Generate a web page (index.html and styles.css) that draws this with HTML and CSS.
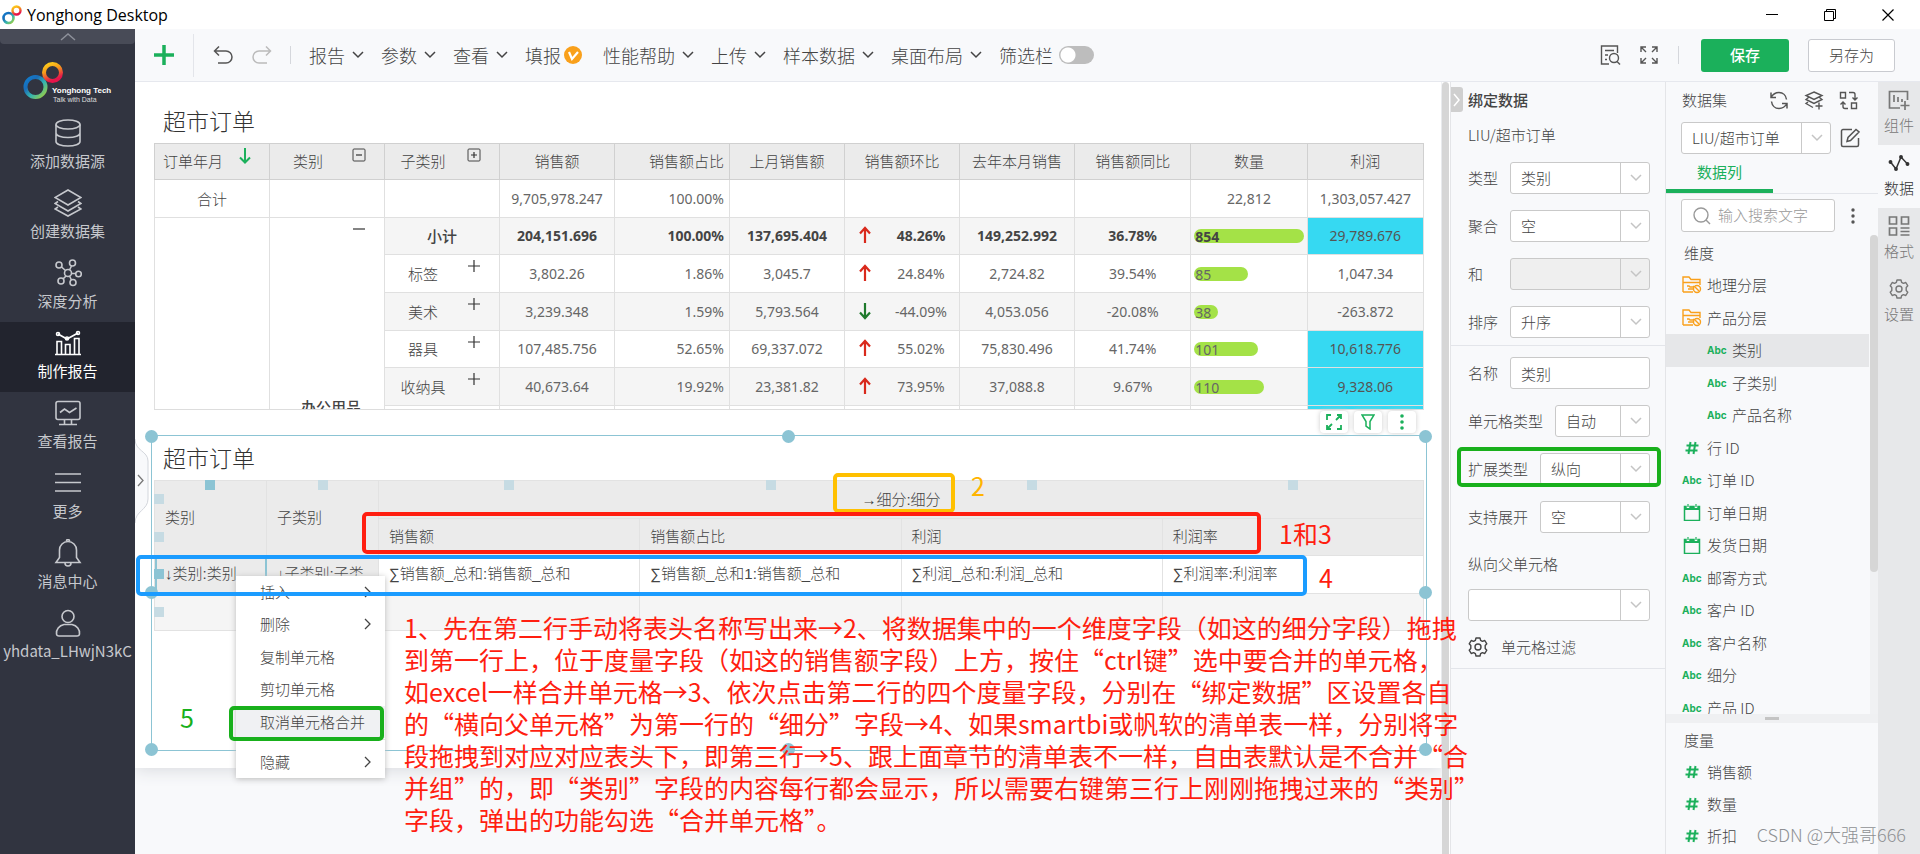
FILE: index.html
```html
<!DOCTYPE html>
<html lang="zh-CN">
<head>
<meta charset="utf-8">
<title>Yonghong Desktop</title>
<link rel="stylesheet" href="styles.css">
</head>
<body>
<svg class="defs" aria-hidden="true">
  <defs>
    <linearGradient id="cool" x1="0" y1="0" x2="1" y2="1"><stop offset="0" stop-color="#0f7fd0"/><stop offset=".3" stop-color="#1a6cb8"/><stop offset=".6" stop-color="#35b5b0"/><stop offset="1" stop-color="#a5d13a"/></linearGradient>
    <linearGradient id="warm" x1="0" y1="0" x2=".4" y2="1"><stop offset="0" stop-color="#ffd21a"/><stop offset=".45" stop-color="#f59a1c"/><stop offset="1" stop-color="#e5144b"/></linearGradient>
    <symbol id="chev" viewBox="0 0 12 8"><path d="M1 1l5 5 5-5" fill="none" stroke="currentColor" stroke-width="1.5"/></symbol>
    <symbol id="right" viewBox="0 0 8 12"><path d="M1 1l5 5-5 5" fill="none" stroke="currentColor" stroke-width="1.3"/></symbol>
    <symbol id="plus" viewBox="0 0 14 14"><path d="M7 1v12M1 7h12" fill="none" stroke="#333" stroke-width="1.2"/></symbol>
    <symbol id="up" viewBox="0 0 14 18"><path d="M7 17V2M2 7.500l5-5.500 5 5.500" fill="none" stroke="#d9291c" stroke-width="2.200"/></symbol>
    <symbol id="down" viewBox="0 0 14 18"><path d="M7 1v15M2 10.500l5 5.500 5-5.500" fill="none" stroke="#1f7a2c" stroke-width="2.200"/></symbol>
    <symbol id="folder" viewBox="0 0 20 18"><path d="M1 16V1h6l2 2.500h9V9M1 16h10M1 6.500h17M5 10h2l1 1h3l1-1M6 13h5" fill="none" stroke="#f9a01b" stroke-width="1.400"/><circle cx="15" cy="13" r="3.500" fill="none" stroke="#f9a01b" stroke-width="1.400"/><path d="M13 11l4 4" stroke="#f9a01b" stroke-width="1.400"/></symbol>
    <symbol id="hash" viewBox="0 0 14 14"><path d="M5.500 1l-2 12M10.500 1l-2 12M1.500 4.500h12M.500 9.500h12" fill="none" stroke="#1bb05b" stroke-width="2"/></symbol>
    <symbol id="cal" viewBox="0 0 17 17"><path d="M1 2.500h15v14H1z" fill="none" stroke="#1bb05b" stroke-width="1.500"/><path d="M1 2h15v4H1z" fill="#1bb05b"/><path d="M4.500 0v4M12.500 0v4" stroke="#f8f9fb" stroke-width="2.500"/><path d="M4.500 0v3M12.500 0v3" stroke="#1bb05b" stroke-width="1.200"/></symbol>
    <symbol id="gear" viewBox="0 0 20 20"><path d="M8 1h4l.6 2.300 1.800 1 2.400-.8 2 3.300L17.200 8.500v3l1.600 1.700-2 3.300-2.400-.8-1.800 1L12 19H8l-.6-2.300-1.800-1-2.400.8-2-3.300 1.600-1.700v-3L1.200 6.800l2-3.300 2.400.8 1.800-1z" fill="none" stroke="currentColor" stroke-width="1.400" stroke-linejoin="round"/><circle cx="10" cy="10" r="3" fill="none" stroke="currentColor" stroke-width="1.400"/></symbol>
  </defs>
</svg>

<header class="titlebar">
  <svg class="app-logo" viewBox="0 0 20 20" width="20" height="20"><circle cx="6.500" cy="13" r="5" fill="none" stroke="url(#cool)" stroke-width="2.600"/><circle cx="14.500" cy="5.500" r="4" fill="none" stroke="url(#warm)" stroke-width="2.400"/></svg>
  <span class="app-name">Yonghong Desktop</span>
  <button class="win" aria-label="最小化"><svg width="12" height="12"><path d="M0 5.500h12" stroke="#000"/></svg></button>
  <button class="win" aria-label="还原"><svg width="12" height="12" fill="none" stroke="#000"><path d="M.500 2.500h9v9h-9zM2.500 2V.500h9v9H10"/></svg></button>
  <button class="win" aria-label="关闭"><svg width="12" height="12"><path d="M.500.500l11 11M11.500.500l-11 11" stroke="#000" stroke-width="1.200"/></svg></button>
</header>

<div class="app">
<nav class="sidebar">
  <button class="collapse" aria-label="收起"><svg width="16" height="8" fill="none" stroke="#8d909a" stroke-width="1.500"><path d="M1 7l7-6 7 6"/></svg></button>
  <svg class="brand" width="100" height="46" viewBox="0 0 100 46"><circle cx="17.500" cy="29" r="10" fill="none" stroke="url(#cool)" stroke-width="4"/><circle cx="34.500" cy="14.500" r="8.500" fill="none" stroke="url(#warm)" stroke-width="4"/><text x="34" y="35" class="brand-name">Yonghong Tech</text><text x="35" y="44" class="brand-tag">Talk with Data</text></svg>
  <a class="nav" href="#"><svg width="28" height="28"><ellipse cx="14" cy="5.500" rx="12" ry="4.500"/><path d="M2 5.500v17c0 2.500 5 4.500 12 4.500s12-2 12-4.500v-17M2 14c0 2.500 5 4.500 12 4.500s12-2 12-4.500"/></svg><span>添加数据源</span></a>
  <a class="nav" href="#"><svg width="28" height="28"><path d="M14 1l13 7.500L14 16 1 8.500zM4 12.500l-3 2L14 22l13-7.500-3-2M4 18l-3 2 13 7 13-7-3-2"/></svg><span>创建数据集</span></a>
  <a class="nav" href="#"><svg width="28" height="28"><circle cx="14" cy="14" r="3.500"/><circle cx="5" cy="6" r="3"/><circle cx="18.500" cy="4" r="3"/><circle cx="24.500" cy="15" r="2.800"/><circle cx="19" cy="23.500" r="3"/><circle cx="7" cy="22" r="3"/><path d="M7.500 8l4 3.500M17.500 7l-2 4M17.500 14.500h4M15.500 17l2 4M12 17l-3 3"/></svg><span>深度分析</span></a>
  <a class="nav active" href="#"><svg width="28" height="28"><path d="M1 25.500h26M3 25V12.500h4.500V25M11.500 25v-9.500H16V25M20.500 25V9.500H25V25M4 5l9 5 11-6"/><circle cx="4" cy="5" r="1.500"/><circle cx="13" cy="9.500" r="1.500"/><circle cx="24" cy="4" r="1.500"/></svg><span>制作报告</span></a>
  <a class="nav" href="#"><svg width="28" height="28"><rect x="2" y="2.500" width="24" height="18" rx="2"/><path d="M6 13.500l4.500-3.500 5 3.500 7-4.500M10.500 21v4M17.500 21v4M5 25.500h18"/></svg><span>查看报告</span></a>
  <a class="nav" href="#"><svg width="28" height="28"><path d="M1 5h26M1 13.500h26M1 22h26"/></svg><span>更多</span></a>
  <a class="nav" href="#"><svg width="28" height="28"><path d="M2 23.500h24l-3.500-5V11a8.500 8.500 0 0 0-17 0v7.500zM12.500 2a1.500 1.500 0 0 1 3 0M11 24a3 3 0 0 0 6 0"/></svg><span>消息中心</span></a>
  <a class="nav" href="#"><svg width="28" height="28"><circle cx="14" cy="7.500" r="6"/><path d="M10 15.500h8c5 1 8 5 7.500 9.500-.2 1.500-1 2-2.500 2H5c-1.500 0-2.300-.5-2.500-2C2 20.500 5 16.500 10 15.500z"/></svg><span>yhdata_LHwjN3kC</span></a>
</nav>

<div class="workspace">
<div class="toolbar">
  <button class="add" aria-label="新建"><svg width="20" height="20"><path d="M10 0v20M0 10h20" stroke="#1bb05b" stroke-width="3.500"/></svg></button>
  <button class="tool" aria-label="撤销"><svg width="20" height="18" fill="none" stroke="#555" stroke-width="1.500"><path d="M1.500 5H13a6 6 0 0 1 0 12H5M6 .500L1.500 5 6 9.500"/></svg></button>
  <button class="tool" aria-label="重做"><svg width="20" height="18" fill="none" stroke="#bbb" stroke-width="1.500"><path d="M18.500 5H7a6 6 0 0 0 0 12h8M14 .500L18.500 5 14 9.500"/></svg></button>
  <i class="sep"></i>
  <div class="menus">
    <button class="menu-btn">报告<svg width="12" height="8"><use href="#chev"/></svg></button>
    <button class="menu-btn">参数<svg width="12" height="8"><use href="#chev"/></svg></button>
    <button class="menu-btn">查看<svg width="12" height="8"><use href="#chev"/></svg></button>
    <button class="menu-btn vip">填报<svg width="18" height="18"><circle cx="9" cy="9" r="9" fill="#f9a01b"/><path d="M5 6l3 7 6-7" fill="none" stroke="#fff" stroke-width="2.200"/></svg></button>
    <button class="menu-btn">性能帮助<svg width="12" height="8"><use href="#chev"/></svg></button>
    <button class="menu-btn">上传<svg width="12" height="8"><use href="#chev"/></svg></button>
    <button class="menu-btn">样本数据<svg width="12" height="8"><use href="#chev"/></svg></button>
    <button class="menu-btn">桌面布局<svg width="12" height="8"><use href="#chev"/></svg></button>
    <label class="filter">筛选栏<input type="checkbox" class="switch"></label>
  </div>
  <div class="actions">
    <button class="tool" aria-label="预览"><svg width="21" height="20" fill="none" stroke="#555" stroke-width="1.400"><path d="M9 19H1.500V1h16v7M5 5.500h9M5 10h3M5 14.500h2"/><circle cx="14" cy="13" r="4.500"/><path d="M17 16.500l3 3"/></svg></button>
    <button class="tool" aria-label="全屏"><svg width="18" height="18" fill="none" stroke="#555" stroke-width="1.400"><path d="M1 6V1h5M1 1l5 5M12 1h5v5M17 1l-5 5M1 12v5h5M1 17l5-5M17 12v5h-5M17 17l-5-5"/></svg></button>
    <i class="sep"></i>
    <button class="save">保存</button>
    <button class="save-as">另存为</button>
  </div>
</div>

<div class="content">
<main class="canvas">
  <div class="sheet">
    <section class="widget">
      <h2>超市订单</h2>
      <div class="clip">
      <table class="pivot">
        <thead><tr>
          <th class="tag">订单年月<svg class="mark" width="12" height="16"><path d="M6 0v14M1 9.500l5 5 5-5" fill="none" stroke="#1bb05b" stroke-width="2"/></svg></th>
          <th class="tag">类别<svg class="mark" width="14" height="14"><rect x="1" y="1" width="12" height="12" rx="1" fill="none" stroke="#444"/><path d="M4 7h6" stroke="#333" stroke-width="1.200"/></svg></th>
          <th class="tag">子类别<svg class="mark" width="14" height="14"><rect x="1" y="1" width="12" height="12" rx="1" fill="none" stroke="#444"/><path d="M4 7h6M7 4v6" stroke="#333" stroke-width="1.200"/></svg></th>
          <th>销售额</th><th class="r">销售额占比</th><th>上月销售额</th><th>销售额环比</th><th>去年本月销售</th><th>销售额同比</th><th>数量</th><th>利润</th>
        </tr></thead>
        <tbody>
          <tr><td class="cn">合计</td><td></td><td></td><td>9,705,978.247</td><td class="r">100.00%</td><td></td><td></td><td></td><td></td><td>22,812</td><td>1,303,057.427</td></tr>
          <tr class="alt bold"><td rowspan="6" class="blank"></td><td rowspan="6" class="blank group cn">办公用品<svg class="mark" width="14" height="14"><path d="M1 7h12" stroke="#333" stroke-width="1.200"/></svg></td><td class="cn">小计</td><td>204,151.696</td><td class="r">100.00%</td><td>137,695.404</td><td class="trend"><svg width="14" height="18"><use href="#up"/></svg><span>48.26%</span></td><td>149,252.992</td><td>36.78%</td><td class="bar"><div style="width:110px">854</div></td><td class="hot">29,789.676</td></tr>
          <tr><td class="cn tag">标签<svg class="mark" width="14" height="14"><use href="#plus"/></svg></td><td>3,802.26</td><td class="r">1.86%</td><td>3,045.7</td><td class="trend"><svg width="14" height="18"><use href="#up"/></svg><span>24.84%</span></td><td>2,724.82</td><td>39.54%</td><td class="bar"><div style="width:54px">85</div></td><td>1,047.34</td></tr>
          <tr class="alt"><td class="cn tag">美术<svg class="mark" width="14" height="14"><use href="#plus"/></svg></td><td>3,239.348</td><td class="r">1.59%</td><td>5,793.564</td><td class="trend"><svg width="14" height="18"><use href="#down"/></svg><span>-44.09%</span></td><td>4,053.056</td><td>-20.08%</td><td class="bar"><div style="width:24px">38</div></td><td>-263.872</td></tr>
          <tr><td class="cn tag">器具<svg class="mark" width="14" height="14"><use href="#plus"/></svg></td><td>107,485.756</td><td class="r">52.65%</td><td>69,337.072</td><td class="trend"><svg width="14" height="18"><use href="#up"/></svg><span>55.02%</span></td><td>75,830.496</td><td>41.74%</td><td class="bar"><div style="width:64px">101</div></td><td class="hot">10,618.776</td></tr>
          <tr class="alt"><td class="cn tag">收纳具<svg class="mark" width="14" height="14"><use href="#plus"/></svg></td><td>40,673.64</td><td class="r">19.92%</td><td>23,381.82</td><td class="trend"><svg width="14" height="18"><use href="#up"/></svg><span>73.95%</span></td><td>37,088.8</td><td>9.67%</td><td class="bar"><div style="width:70px">110</div></td><td class="hot">9,328.06</td></tr>
          <tr><td></td><td></td><td></td><td></td><td></td><td></td><td></td><td></td><td class="hot"></td></tr>
        </tbody>
      </table>
      </div>
    </section>

    <section class="widget selected">
      <div class="float-tools">
        <button aria-label="放大"><svg width="16" height="16" fill="none" stroke="#1bb05b" stroke-width="1.800"><path d="M1 6V1h4M11 1h4v4M15 1l-5 5M15 11v4h-4M5 15H1v-4M1 15l5-5"/></svg></button>
        <button aria-label="筛选"><svg width="14" height="16" fill="none" stroke="#1bb05b" stroke-width="1.500"><path d="M1 1h12L9 7.500V15l-4-3V7.500z"/></svg></button>
        <button aria-label="更多"><svg width="6" height="16" fill="#1bb05b"><circle cx="3" cy="2" r="1.800"/><circle cx="3" cy="8" r="1.800"/><circle cx="3" cy="14" r="1.800"/></svg></button>
      </div>
      <h2>超市订单</h2>
      <table class="free">
        <colgroup><col class="dim"><col class="dim"><col><col><col><col></colgroup>
        <tr class="head"><td rowspan="2">类别</td><td rowspan="2">子类别</td><td colspan="4" class="center">→细分:细分</td></tr>
        <tr class="head"><td>销售额</td><td>销售额占比</td><td>利润</td><td>利润率</td></tr>
        <tr><td class="dimcell picked">↓类别:类别</td><td class="dimcell">↓子类别:子类</td><td>∑销售额_总和:销售额_总和</td><td>∑销售额_总和1:销售额_总和</td><td>∑利润_总和:利润_总和</td><td>∑利润率:利润率</td></tr>
        <tr class="tail"><td class="dimcell"></td><td></td><td></td><td></td><td></td><td></td></tr>
      </table>
      <i class="sq on c1"></i><i class="sq c2"></i><i class="sq c3"></i><i class="sq c4"></i><i class="sq c5"></i><i class="sq c6"></i>
      <i class="sq r1"></i><i class="sq r2"></i><i class="sq on r3"></i><i class="sq r4"></i>
      <i class="dot tl"></i><i class="dot tc"></i><i class="dot tr"></i><i class="dot ml"></i><i class="dot mr"></i><i class="dot bl"></i><i class="dot bc"></i><i class="dot br"></i>
    </section>
  </div>
  <button class="drawer" aria-label="展开"><svg width="15" height="86"><path d="M0 1c0 12 13 12 13 22v38c0 11-13 12-13 24" fill="#f8f9fb" stroke="#d3d6dc"/><path d="M3 37l5 5.500-5 5.500" fill="none" stroke="#777" stroke-width="1.300"/></svg></button>
  <div class="context" role="menu">
    <button role="menuitem">插入<svg width="8" height="12"><use href="#right"/></svg></button>
    <button role="menuitem">删除<svg width="8" height="12"><use href="#right"/></svg></button>
    <button role="menuitem">复制单元格</button>
    <button role="menuitem">剪切单元格</button>
    <button role="menuitem" class="hover">取消单元格合并</button>
    <hr>
    <button role="menuitem">隐藏<svg width="8" height="12"><use href="#right"/></svg></button>
  </div>
</main>
<div class="vscroll"></div>

<aside class="bind">
  <button class="fold" aria-label="折叠"><svg width="8" height="14" fill="none" stroke="#fff" stroke-width="1.500"><path d="M1 1l5 6-5 6"/></svg></button>
  <h3>绑定数据</h3>
  <p class="source">LIU/超市订单</p>
  <div class="row"><label for="f1">类型</label><span class="sel w140"><select id="f1"><option>类别</option></select><i><svg width="12" height="8"><use href="#chev"/></svg></i></span></div>
  <div class="row"><label for="f2">聚合</label><span class="sel w140"><select id="f2"><option>空</option></select><i><svg width="12" height="8"><use href="#chev"/></svg></i></span></div>
  <div class="row"><label for="f3">和</label><span class="sel w140"><select id="f3" disabled><option></option></select><i><svg width="12" height="8"><use href="#chev"/></svg></i></span></div>
  <div class="row"><label for="f4">排序</label><span class="sel w140"><select id="f4"><option>升序</option></select><i><svg width="12" height="8"><use href="#chev"/></svg></i></span></div>
  <hr>
  <div class="row"><label for="f5">名称</label><input id="f5" class="text w140" value="类别"></div>
  <div class="row"><label for="f6">单元格类型</label><span class="sel w95"><select id="f6"><option>自动</option></select><i><svg width="12" height="8"><use href="#chev"/></svg></i></span></div>
  <div class="row"><label for="f7">扩展类型</label><span class="sel w110"><select id="f7"><option>纵向</option></select><i><svg width="12" height="8"><use href="#chev"/></svg></i></span></div>
  <div class="row"><label for="f8">支持展开</label><span class="sel w110"><select id="f8"><option>空</option></select><i><svg width="12" height="8"><use href="#chev"/></svg></i></span></div>
  <div class="row heading"><label for="f9">纵向父单元格</label></div>
  <div class="row"><span class="sel full"><select id="f9"><option></option></select><i><svg width="12" height="8"><use href="#chev"/></svg></i></span></div>
  <button class="cell-filter"><svg width="20" height="20"><use href="#gear"/></svg>单元格过滤</button>
  <hr>
</aside>

<aside class="dataset">
  <div class="ds-head"><h3>数据集</h3>
    <button aria-label="刷新"><svg width="20" height="19" fill="none" stroke="#555" stroke-width="1.500"><path d="M2 6.500C4 3 7 1.500 10 1.500c4 0 7 3 7.500 7M18 12.500c-2 3.500-5 5-8 5-4 0-7-3-7.500-7M2 1.500v5h5M18 17.500v-5h-5"/></svg></button>
    <button aria-label="添加"><svg width="20" height="19" fill="none" stroke="#555" stroke-width="1.400"><path d="M10 1l8 3.500-8 4-8-4zM4.500 6.500L2 8.500l8 4 8-4-2.500-2M4 11l-2 1.500 7 4M15 11.500v7M11.500 15h7"/></svg></button>
    <button aria-label="替换"><svg width="19" height="19" fill="none" stroke="#555" stroke-width="1.400"><path d="M1.500 1.500h5v5.500h-5zM12.500 12h5v5.500h-5zM10 1.500h4q2 0 2 2V9M13.500 6.500L16 9l2.500-2.500M9 17.500H6q-2 0-2-2V11M1.500 13.500L4 11l2.500 2.500"/></svg></button>
  </div>
  <div class="ds-pick"><span class="sel w150"><select aria-label="数据集"><option>LIU/超市订单</option></select><i><svg width="12" height="8"><use href="#chev"/></svg></i></span>
    <button aria-label="编辑"><svg width="20" height="20" fill="none" stroke="#555" stroke-width="1.500"><path d="M12 1.500H3a1.500 1.500 0 0 0-1.500 1.500v14A1.500 1.500 0 0 0 3 18.500h14a1.500 1.500 0 0 0 1.500-1.500v-7M7 13.500l1-4L16 1.500l3 2.500-8.500 8.500z"/></svg></button></div>
  <div class="tabs"><button>数据列</button></div>
  <div class="ds-search"><label class="search"><svg width="18" height="18" fill="none" stroke="#999" stroke-width="1.400"><circle cx="8" cy="8" r="7"/><path d="M13 13l4 4"/></svg><input placeholder="输入搜索文字" aria-label="搜索"></label>
    <button aria-label="更多"><svg width="4" height="16" fill="#555"><circle cx="2" cy="2" r="1.700"/><circle cx="2" cy="8" r="1.700"/><circle cx="2" cy="14" r="1.700"/></svg></button></div>
  <div class="fields">
    <h4>维度</h4>
    <ul class="tree">
      <li><svg width="20" height="18"><use href="#folder"/></svg>地理分层</li>
      <li><svg width="20" height="18"><use href="#folder"/></svg>产品分层</li>
      <li class="sub current"><b>Abc</b>类别</li>
      <li class="sub"><b>Abc</b>子类别</li>
      <li class="sub"><b>Abc</b>产品名称</li>
      <li><svg width="20" height="14"><use href="#hash"/></svg>行 ID</li>
      <li><b>Abc</b>订单 ID</li>
      <li><svg width="20" height="17"><use href="#cal"/></svg>订单日期</li>
      <li><svg width="20" height="17"><use href="#cal"/></svg>发货日期</li>
      <li><b>Abc</b>邮寄方式</li>
      <li><b>Abc</b>客户 ID</li>
      <li><b>Abc</b>客户名称</li>
      <li><b>Abc</b>细分</li>
      <li><b>Abc</b>产品 ID</li>
    </ul>
    <div class="track"><div class="thumb"></div></div>
  </div>
  <div class="splitter"><i></i></div>
  <div class="measures">
    <h4>度量</h4>
    <ul class="list">
      <li><svg width="20" height="14"><use href="#hash"/></svg>销售额</li>
      <li><svg width="20" height="14"><use href="#hash"/></svg>数量</li>
      <li><svg width="20" height="14"><use href="#hash"/></svg>折扣</li>
    </ul>
  </div>
</aside>

<nav class="rail">
  <button><svg width="22" height="20" fill="none" stroke="currentColor" stroke-width="1.700"><path d="M12 18H1.500V1.500h18V10M6 5v7M10 7v5M14 9v3M17 11v9M12.500 15.500h9"/></svg>组件</button>
  <button class="on"><svg width="22" height="20" fill="none" stroke="currentColor" stroke-width="1.500"><path d="M2.500 9l5.500 7 5-12 6.500 7"/><g fill="currentColor"><circle cx="2.500" cy="9" r="1.200"/><circle cx="8" cy="16" r="1.200"/><circle cx="13" cy="4" r="1.200"/><circle cx="19.500" cy="11" r="1.200"/></g></svg>数据</button>
  <button><svg width="22" height="20" fill="none" stroke="currentColor" stroke-width="1.700"><path d="M1.500 1h7v7h-7zM13.500 1h7v7h-7zM1.500 12h7v7h-7zM12.500 12h9M12.500 15.500h9M12.500 19h9"/></svg>格式</button>
  <button><svg width="20" height="20"><use href="#gear"/></svg>设置</button>
</nav>
</div>
</div>
</div>

<div class="notes">
  <div class="box orange"></div><div class="box red"></div><div class="box blue"></div><div class="box green menu-box"></div><div class="box green field-box"></div>
  <span class="num n2">2</span><span class="num n13">1和3</span><span class="num n4">4</span><span class="num n5">5</span>
  <p class="guide">1、先在第二行手动将表头名称写出来→2、将数据集中的一个维度字段（如这的细分字段）拖拽<br>到第一行上，位于度量字段（如这的销售额字段）上方，按住“ctrl键”选中要合并的单元格，<br>如excel一样合并单元格→3、依次点击第二行的四个度量字段，分别在“绑定数据”区设置各自<br>的“横向父单元格”为第一行的“细分”字段→4、如果smartbi或帆软的清单表一样，分别将字<br>段拖拽到对应对应表头下，即第三行→5、跟上面章节的清单表不一样，自由表默认是不合并“合<br>并组”的，即“类别”字段的内容每行都会显示，所以需要右键第三行上刚刚拖拽过来的“类别”<br>字段，弹出的功能勾选“合并单元格”。</p>
  <span class="watermark">CSDN @大强哥666</span>
</div>
</body>
</html>
```

FILE: styles.css
```css
* { box-sizing: border-box; }
html, body { height: 100%; margin: 0; }
body { display: flex; flex-direction: column; position: relative; overflow: hidden; font: 15px/20px "Noto Sans CJK SC", "Noto Sans", sans-serif; font-weight: 300; color: #444; background: #fff; }
button, input, select { font: inherit; color: inherit; }
button { background: none; border: 0; padding: 0; display: flex; align-items: center; }
h2, h3, h4, p, ul { margin: 0; padding: 0; font-weight: 300; }
ul { list-style: none; }
i { font-style: normal; }
svg { flex: none; }
.defs { position: absolute; width: 0; height: 0; }

.titlebar { flex: none; height: 29px; display: flex; align-items: center; padding-right: 3px; }
.app-logo { margin-left: 2px; }
.app-name { flex: 1; margin-left: 5px; font: 16px/20px "Open Sans", sans-serif; color: #000; }
.win { width: 58px; height: 28px; justify-content: center; }

.app { flex: 1; min-height: 0; display: flex; }
.sidebar { flex: none; width: 135px; background: #313440; display: flex; flex-direction: column; }
.collapse { height: 15px; justify-content: center; background: #484b57; border-radius: 0 0 4px 4px; }
.brand { margin: 14px 0 8px 18px; }
.brand-name { font: bold 8px "Liberation Sans", sans-serif; fill: #fff; }
.brand-tag { font: 7px "Liberation Sans", sans-serif; fill: #ddd; }
.nav { height: 70px; padding-top: 7px; display: flex; flex-direction: column; align-items: center; gap: 4px; color: #c6c8cd; text-decoration: none; font-weight: 400; }
.nav svg { fill: none; stroke: currentColor; stroke-width: 1.6; }
.nav.active { background: #22242e; color: #fff; }

.workspace { flex: 1; min-width: 0; display: flex; flex-direction: column; }
.toolbar { flex: none; height: 53px; display: flex; align-items: center; background: #f8f9fb; border-bottom: 1px solid #e6e8ee; font-size: 18px; color: #444; }
.add { width: 59px; height: 43px; justify-content: center; border-right: 1px solid #e3e5ea; }
.tool { margin-left: 19px; }
.sep { width: 1px; height: 18px; background: #d5d7dc; margin-left: 18px; }
.menus { display: flex; align-items: center; gap: 17px; margin-left: 18px; }
.menu-btn, .filter { padding-bottom: 1px; }
.menu-btn { gap: 7px; }
.menu-btn.vip { gap: 3px; margin-right: 4px; }
.filter { display: flex; align-items: center; gap: 6px; }
.switch { appearance: none; margin: 0; width: 35px; height: 18px; border-radius: 9px; background: radial-gradient(circle at 9px 9px, #fff 7px, #bdbdbd 8px); }
.actions { margin-left: auto; margin-right: 25px; display: flex; align-items: center; font-size: 15px; }
.actions .sep { margin-left: 20px; }
.save, .save-as { height: 33px; border-radius: 3px; justify-content: center; }
.save { width: 88px; margin-left: 22px; background: #1bb05b; color: #fff; font-weight: 500; }
.save-as { width: 87px; margin-left: 19px; background: #fff; border: 1px solid #c9cbd0; }

.content { flex: 1; min-height: 0; display: flex; }
.canvas { flex: 1; min-width: 0; position: relative; background: #f8f9fb; overflow: hidden; }
.sheet { padding: 18px 14px 17px 16px; margin-right: 1px; background: #fff; box-shadow: 0 2px 16px #d8dade; }
.widget h2 { font-size: 23px; line-height: 40px; color: #333; }
.widget:first-child { padding: 0 3px; }
.widget:first-child h2 { padding: 0 0 3px 9px; }
.clip { height: 267px; overflow: hidden; border-bottom: 1px solid #ddd; }
table { border-collapse: collapse; table-layout: fixed; width: 100%; }
th, td { border: 1px solid #e0e0e0; padding: 0; font-weight: 300; }
.pivot tr { height: 38px; }
.pivot tbody tr:nth-child(3n+2) { height: 37px; }
.pivot thead tr { height: 36px; }
.pivot th { background: #ebebeb; border-color: #d0d0d0; position: relative; padding-bottom: 1px; }
.pivot th:nth-child(-n+8) { width: 115px; }
.pivot td { text-align: center; font: 400 14px/20px "Noto Sans", sans-serif; color: #666; position: relative; }
.pivot td.cn { font: 300 15px/20px "Noto Sans CJK SC", sans-serif; color: #444; }
.pivot .tag { padding-right: 38px; }
.pivot .mark { position: absolute; right: 18px; top: 4px; }
.pivot .r { text-align: right; padding-right: 5px; }
.pivot tr.alt td { background: #f5f5f5; }
.pivot tr.bold td { font-weight: 700; color: #444; }
.pivot tr.bold td.cn { font-weight: 500; }
.pivot tr td.blank { background: #fff; vertical-align: bottom; padding-bottom: 26px; padding-left: 8px; }
.pivot tr td.hot { background: #36d9f2; font-weight: 400; color: #555; }
.trend svg { float: left; margin-left: 13px; }
.trend span { display: block; margin-left: 38px; }
.bar div { height: 14px; line-height: 15px; border-radius: 7px; background: #a4e247; text-align: left; padding-left: 1px; }
.pivot td.bar { padding-left: 3px; }

.selected { position: relative; margin-top: 25px; height: 316px; border: 1px solid #8cc4d4; padding: 0 2px; }
.widget.selected h2 { line-height: 42px; padding: 0 0 2px 9px; }
.free { font-family: "Liberation Sans", "Noto Sans CJK SC", sans-serif; }
.free .dim { width: 112px; }
.free td { height: 37px; padding: 0 0 1px 10px; white-space: nowrap; overflow: hidden; border-color: #e2e2e2; }
.free tr { height: 37px; }
.free tr:nth-child(odd) { height: 38px; }
.free .head td, .free td.dimcell { background: #ebebeb; }
.free .center { text-align: center; padding: 0; }
.free .tail td { background: #f5f5f5; }
.free .picked { outline: 2px solid #8cc4d4; outline-offset: -2px; }
.sq { position: absolute; width: 10px; height: 10px; background: #c6dbe3; top: 44px; left: 2px; }
.sq.on { background: #8cc4d4; }
.c1 { left: 53px; } .c2 { left: 166px; } .c3 { left: 352px; } .c4 { left: 48.2%; } .c5 { left: 68.7%; } .c6 { left: 89.2%; }
.r1 { top: 58px; } .r2 { top: 96px; } .r3 { top: 133px; } .r4 { top: 171px; }
.dot { position: absolute; width: 13px; height: 13px; border-radius: 50%; background: #8cc4d4; margin: -7px; }
.tl, .tc, .tr { top: 1px; } .bl, .bc, .br { top: 100%; } .ml, .mr { top: 50%; }
.tl, .ml, .bl { left: 0; } .tc, .bc { left: 50%; } .tr, .mr, .br { left: 100%; }
.float-tools { position: absolute; right: 10px; top: -25px; display: flex; gap: 6px; }
.float-tools button { width: 28px; height: 22px; justify-content: center; background: #fff; border-radius: 4px; box-shadow: 0 0 5px #ccc; }
.drawer { position: absolute; left: 0; top: 356px; }
.context { position: absolute; left: 101px; top: 494px; width: 149px; background: #fff; box-shadow: 0 1px 6px #bbb; }
.context button { width: 100%; height: 32px; padding: 0 13px 1px 24px; justify-content: space-between; white-space: nowrap; }
.context button:nth-child(even) { height: 33px; }
.context .hover { background: #f0f1f3; }
.context hr { margin: 1px 0 6px; border: 0; border-top: 1px solid #e4e4e4; }
.vscroll { width: 7px; margin-right: 1px; background: #d6d6d6; border-radius: 4px 4px 0 0; }

.bind { flex: none; width: 215px; border-left: 1px solid #e4e5e8; background: #f8f9fb; position: relative; padding-top: 8px; }
.fold { position: absolute; left: 0; top: 5px; width: 12px; height: 25px; background: #cfcfcf; justify-content: center; border-radius: 0 3px 3px 0; }
.bind h3 { font-size: 15px; font-weight: 500; padding-left: 17px; }
.source { padding: 15px 0 17px 17px; }
.row { display: flex; align-items: center; justify-content: space-between; height: 32px; margin: 0 15px 16px 17px; }
.row.heading { height: 30px; margin-bottom: 10px; }
.bind hr { border: 0; border-top: 1px solid #e3e5ea; margin: -9px 0 11px; }
.row label { white-space: nowrap; padding-bottom: 1px; }
.sel { display: grid; height: 32px; }
.sel select { grid-area: 1 / 1; width: 100%; appearance: none; border: 1px solid #c9c9c9; border-radius: 3px; background: #fff; padding: 0 30px 0 10px; opacity: 1; }
.sel select:disabled { background: #efefef; }
.sel i { grid-area: 1 / 1; justify-self: end; width: 30px; border-left: 1px solid #c9c9c9; display: flex; align-items: center; justify-content: center; color: #c4c4c4; pointer-events: none; }
.w140 { width: 140px; } .w95 { width: 95px; } .w110 { width: 110px; } .w150 { width: 150px; } .full { width: 100%; }
.text { height: 32px; border: 1px solid #c9c9c9; border-radius: 3px; padding: 0 10px; background: #fff; }
.cell-filter { gap: 13px; margin: 0 0 20px 17px; height: 20px; }

.dataset { flex: none; width: 213px; border-left: 1px solid #e4e5e8; background: #f8f9fb; display: flex; flex-direction: column; overflow: hidden; }
.ds-head { display: flex; align-items: center; gap: 15px; padding: 6px 20px 0 16px; height: 30px; flex: none; }
.ds-head h3 { font-size: 15px; flex: 1; }
.ds-pick { display: flex; gap: 9px; padding: 10px 0 0 15px; flex: none; }
.tabs { flex: none; border-bottom: 1px solid #e3e5ea; margin-top: 1px; }
.tabs button { width: 107px; height: 38px; padding-left: 31px; color: #1bb05b; font-weight: 400; border-bottom: 4px solid #1bb05b; }
.ds-search { display: flex; flex: none; gap: 16px; padding: 5px 0 0 15px; }
.search { display: flex; align-items: center; gap: 7px; width: 154px; height: 33px; border: 1px solid #c9c9c9; border-radius: 3px; background: #fff; padding-left: 11px; }
.search input { width: 100px; border: 0; padding: 0 0 1px; outline: 0; background: none; }
.search input::placeholder { color: #999; }
.fields { flex: 1; min-height: 0; overflow: hidden; display: grid; grid-template: auto 1fr / 1fr 8px; column-gap: 1px; }
h4 { font-size: 15px; padding: 11px 0 6px 18px; }
.tree { display: grid; grid-template-rows: repeat(14, 1fr); height: 455px; grid-column: 1; }
li { display: flex; align-items: center; padding-left: 16px; gap: 5px; white-space: nowrap; }
li.sub { padding-left: 41px; }
li.current { background: #e6e7e9; }
li b { width: 20px; font: bold 10px/16px "Inter", sans-serif; color: #1bb05b; }
.track { grid-area: 1 / 2 / 3 / 3; background: #f0f1f3; margin-top: 3px; border-radius: 4px; }
.thumb { height: 337px; border-radius: 4px; background: #d6d6d6; }
.splitter { flex: none; height: 9px; background: #eff0f2; display: flex; justify-content: center; align-items: center; }
.splitter i { width: 14px; height: 3px; background: #c4c4c4; }
.measures { flex: none; height: 131px; overflow: hidden; }
.measures h4 { padding-top: 7px; }
.list li { height: 32px; }

.rail { flex: none; width: 42px; background: #e7e8ea; }
.rail button { width: 100%; height: 63px; padding-bottom: 3px; flex-direction: column; justify-content: center; gap: 5px; color: #777; }
.rail .on { background: #f8f9fb; color: #333; }

.notes { position: absolute; inset: 0; pointer-events: none; font-weight: 400; color: #ff1e10; }
.box { position: absolute; border: 4px solid; border-radius: 5px; }
.orange { left: 833px; top: 473px; width: 122px; height: 40px; color: #ffc000; }
.red { left: 362px; top: 512px; width: 899px; height: 42px; }
.blue { left: 136px; top: 555px; width: 1171px; height: 41px; color: #1b9cff; }
.green { color: #19b01c; }
.menu-box { left: 229px; top: 706px; width: 155px; height: 35px; }
.field-box { left: 1457px; top: 447px; width: 204px; height: 40px; }
.num { position: absolute; font-size: 25px; line-height: 32px; }
.n2 { left: 971px; top: 469px; color: #ffb400; }
.n13 { left: 1279px; top: 517px; }
.n4 { left: 1319px; top: 561px; }
.n5 { left: 180px; top: 701px; color: #19b01c; }
.guide { position: absolute; left: 404px; top: 611px; font-size: 25px; line-height: 32px; font-weight: 400; white-space: nowrap; }
.watermark { position: absolute; right: 14px; bottom: 6px; font-size: 18px; line-height: 28px; color: #8f9194; font-weight: 300; }
```
